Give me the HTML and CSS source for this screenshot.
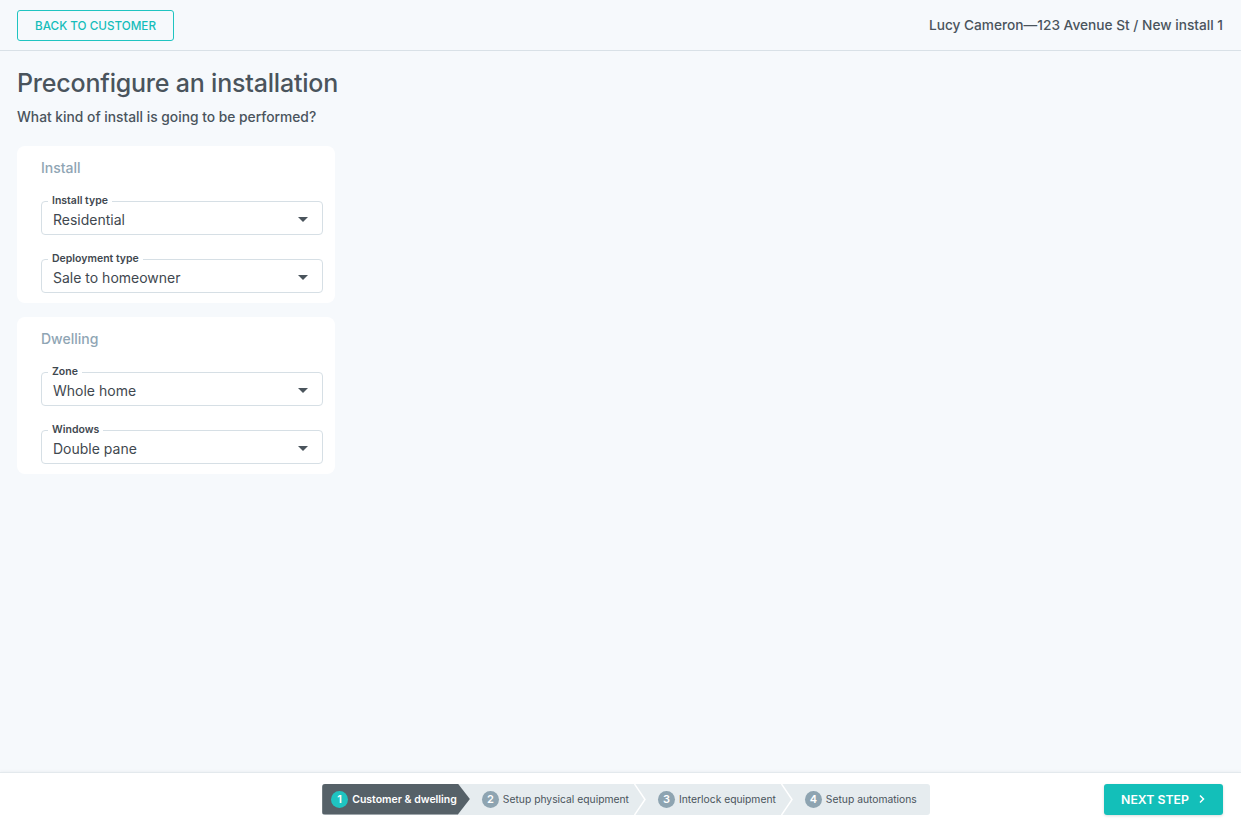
FILE: index.html
```html
<!DOCTYPE html>
<html lang="en">
<head>
    <meta charset="UTF-8">
    <meta name="viewport" content="width=device-width, initial-scale=1.0">
    <title>Preconfigure an installation</title>
    <link rel="stylesheet" href="styles.css">
</head>
<body>
    <header class="topbar">
        <button class="btn-outline">Back to customer</button>
        <div class="crumb">Lucy Cameron—123 Avenue St / New install 1</div>
    </header>

    <main class="content">
        <h1>Preconfigure an installation</h1>
        <p class="lead">What kind of install is going to be performed?</p>

        <section class="card">
            <h2>Install</h2>
            <div class="field">
                <span class="field-label">Install type</span>
                <span class="field-value">Residential</span>
                <span class="caret"></span>
            </div>
            <div class="field">
                <span class="field-label">Deployment type</span>
                <span class="field-value">Sale to homeowner</span>
                <span class="caret"></span>
            </div>
        </section>

        <section class="card">
            <h2>Dwelling</h2>
            <div class="field">
                <span class="field-label">Zone</span>
                <span class="field-value">Whole home</span>
                <span class="caret"></span>
            </div>
            <div class="field">
                <span class="field-label">Windows</span>
                <span class="field-value">Double pane</span>
                <span class="caret"></span>
            </div>
        </section>
    </main>

    <footer class="bottombar">
        <div></div>
        <ol class="stepper">
            <li class="step active"><span class="num">1</span>Customer &amp; dwelling</li>
            <li class="step"><span class="num">2</span>Setup physical equipment<svg class="sep" width="12" height="31" viewBox="0 0 12 31"><polyline points="0.5,0 11,15.5 0.5,31" fill="none" stroke="#fff" stroke-width="1.5"/></svg></li>
            <li class="step"><span class="num">3</span>Interlock equipment<svg class="sep" width="12" height="31" viewBox="0 0 12 31"><polyline points="0.5,0 11,15.5 0.5,31" fill="none" stroke="#fff" stroke-width="1.5"/></svg></li>
            <li class="step"><span class="num">4</span>Setup automations</li>
        </ol>
        <button class="btn-primary">Next step <svg width="8" height="10" viewBox="0 0 8 10"><polyline points="2,1.5 5.5,5 2,8.5" fill="none" stroke="#fff" stroke-width="1.5"/></svg></button>
    </footer>
</body>
</html>
```

FILE: styles.css
```css
body {
    font-family: Inter, "Noto Sans", sans-serif;
    margin: 0;
    padding: 0;
    background-color: #f6f9fc;
    color: #4a545c;
    height: 825px;
    display: flex;
    flex-direction: column;
}
.topbar {
    height: 51px;
    box-sizing: border-box;
    border-bottom: 1px solid #d9e1e7;
    display: flex;
    align-items: center;
    justify-content: space-between;
    padding: 0 18px 0 17px;
}
.btn-outline {
    font-family: inherit;
    height: 31px;
    width: 157px;
    background: transparent;
    border: 1px solid #1fc4c1;
    border-radius: 3px;
    color: #14bdba;
    font-size: 11.7px;
    font-weight: 500;
    text-transform: uppercase;
    cursor: pointer;
    margin-top: 1px;
}
.crumb {
    font-size: 13.7px;
    font-weight: 500;
    color: #4a545c;
}
.content {
    flex: 1;
    padding: 17px 17px 0;
}
h1 {
    margin: 0;
    font-size: 25px;
    font-weight: 500;
    letter-spacing: -0.2px;
    color: #4a545c;
    line-height: 30px;
}
.lead {
    margin: 10px 0 20px;
    font-size: 13.8px;
    font-weight: 500;
    line-height: 18px;
}
.card {
    width: 318px;
    box-sizing: border-box;
    background: #fff;
    border-radius: 8px;
    padding: 13px 12px 10px 24px;
    margin-bottom: 14px;
}
.card h2 {
    margin: 0 0 25px;
    font-size: 14px;
    font-weight: 500;
    color: #8fa5b4;
    line-height: 17px;
}
.field {
    position: relative;
    height: 34px;
    box-sizing: border-box;
    border: 1px solid #d6dfe5;
    border-radius: 4px;
    display: flex;
    align-items: center;
    padding: 2px 12px 0 11px;
    margin-bottom: 24px;
}
.field:last-child {
    margin-bottom: 0;
}
.field-label {
    position: absolute;
    top: -7px;
    left: 6px;
    padding: 0 4px;
    background: #fff;
    font-size: 10.5px;
    font-weight: 600;
    line-height: 12px;
    color: #3f484f;
}
.field-value {
    flex: 1;
    font-size: 14px;
    color: #3f484f;
}
.caret {
    width: 0;
    height: 0;
    border-left: 5px solid transparent;
    border-right: 5px solid transparent;
    border-top: 5px solid #4a545c;
    margin-right: 2px;
}
.bottombar {
    height: 53px;
    box-sizing: border-box;
    background: #fff;
    border-top: 1px solid #e3e9ed;
    box-shadow: 0 -1px 3px rgba(0, 0, 0, 0.04);
    display: grid;
    grid-template-columns: 1fr auto 1fr;
    align-items: center;
    padding: 0 18px 0 17px;
}
.stepper {
    list-style: none;
    margin: 0 0 0 12px;
    padding: 0;
    display: flex;
    height: 31px;
    background: #e6ecef;
    border-radius: 3px;
    overflow: hidden;
}
.step {
    display: flex;
    align-items: center;
    font-size: 10.3px;
    font-weight: 400;
    color: #4a545c;
    padding-left: 12px;
    white-space: nowrap;
}
.step .num {
    width: 17px;
    height: 17px;
    border-radius: 50%;
    background: #8ea4b1;
    color: #fff;
    font-size: 11px;
    font-weight: 600;
    display: flex;
    align-items: center;
    justify-content: center;
    margin-right: 4px;
}
.step .sep {
    margin-left: 5px;
}
.step:last-child {
    padding-right: 13px;
}
.step.active {
    background: #566168;
    color: #fff;
    font-size: 10.5px;
    font-weight: 600;
    padding-left: 9px;
    padding-right: 13px;
    clip-path: polygon(0 0, calc(100% - 12px) 0, 100% 50%, calc(100% - 12px) 100%, 0 100%);
}
.step.active .num {
    background: #1fc4c1;
}
.btn-primary {
    justify-self: end;
    font-family: inherit;
    height: 31px;
    width: 119px;
    border: none;
    border-radius: 3px;
    background: #13bfb9;
    color: #fff;
    font-size: 12.3px;
    font-weight: 600;
    text-transform: uppercase;
    display: flex;
    align-items: center;
    justify-content: center;
    gap: 9px;
    box-shadow: 0 1px 3px rgba(0, 0, 0, 0.15);
    cursor: pointer;
}
```
